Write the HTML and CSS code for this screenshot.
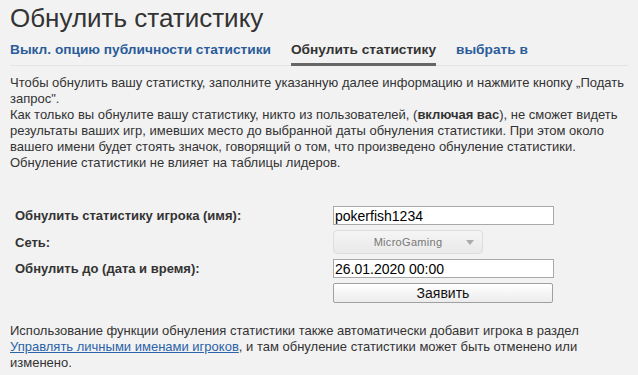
FILE: index.html
```html
<!DOCTYPE html>
<html lang="ru">
  <head>
    <title>Обнулить статистику</title>
    <meta charset="UTF-8" />
    <link rel="stylesheet" href="styles.css">
  </head>
  <body>
    <div class="page">
      <h1 class="page__title">Обнулить статистику</h1>

      <div class="tabs">
        <a class="tabs__item" href="#">Выкл. опцию публичности статистики</a>
        <a class="tabs__item tabs__item--active" href="#">Обнулить статистику</a>
        <a class="tabs__item" href="#">выбрать в</a>
      </div>

      <p class="page__text">
        Чтобы обнулить вашу статистку, заполните указанную далее информацию и нажмите кнопку „Подать запрос".<br>
        Как только вы обнулите вашу статистику, никто из пользователей, (<b>включая вас</b>), не сможет видеть результаты ваших игр, имевших место до выбранной даты обнуления статистики. При этом около вашего имени будет стоять значок, говорящий о том, что произведено обнуление статистики. Обнуление статистики не влияет на таблицы лидеров.
      </p>

      <form class="reset-form">
        <div class="reset-form__row">
          <label class="reset-form__label">Обнулить статистику игрока (имя):</label>
          <input class="reset-form__input" type="text" value="pokerfish1234">
        </div>
        <div class="reset-form__row">
          <label class="reset-form__label">Сеть:</label>
          <div class="select select--disabled">
            <span class="select__value">MicroGaming</span>
            <span class="select__arrow"></span>
          </div>
        </div>
        <div class="reset-form__row">
          <label class="reset-form__label">Обнулить до (дата и время):</label>
          <input class="reset-form__input" type="text" value="26.01.2020 00:00">
        </div>
        <div class="reset-form__row">
          <span class="reset-form__label"></span>
          <button class="reset-form__button" type="button">Заявить</button>
        </div>
      </form>

      <p class="page__text page__note">
        Использование функции обнуления статистики также автоматически добавит игрока в раздел
        <a href="#">Управлять личными именами игроков</a>, и там обнуление статистики может быть отменено или изменено.
      </p>
    </div>
  </body>
</html>
```

FILE: styles.css
```css
body {
  margin: 0;
  font-family: 'Liberation Sans', Arial, sans-serif;
  background: #f2f2f2;
  color: #333333;
}

.page {
  padding: 0 10px;
}

.page__title {
  margin: 0;
  padding-top: 3px;
  font-size: 26px;
  font-weight: normal;
  line-height: 30px;
  color: #333333;
}

.tabs {
  display: flex;
  gap: 20px;
  margin-top: 6px;
  border-bottom: 1px solid #e4e4e4;
}

.tabs__item {
  padding: 3px 0 5px;
  font-size: 13.7px;
  font-weight: bold;
  line-height: 16px;
  color: #2b5c9a;
  text-decoration: none;
  border-bottom: 3px solid transparent;
  margin-bottom: -1px;
}

.tabs__item--active {
  color: #333333;
  border-bottom-color: #666666;
}

.page__text {
  margin: 9px 0 0;
  font-size: 13px;
  line-height: 16px;
}

.page__text a {
  color: #2b62a8;
}

.reset-form {
  margin-top: 35px;
  padding-left: 5px;
}

.reset-form__row {
  display: flex;
  align-items: center;
  margin-bottom: 5px;
}

.reset-form__label {
  width: 318px;
  font-size: 13px;
  font-weight: bold;
}

.reset-form__input {
  box-sizing: border-box;
  width: 221px;
  height: 19px;
  padding: 0 1px;
  border: 1px solid #a9a9a9;
  background: #ffffff;
  font-family: 'Liberation Sans', Arial, sans-serif;
  font-size: 14px;
  color: #000000;
}

.select {
  box-sizing: border-box;
  position: relative;
  display: flex;
  align-items: center;
  justify-content: center;
  width: 150px;
  height: 24px;
  border: 1px solid #dddddd;
  border-radius: 4px;
  background: linear-gradient(#f5f5f5, #e9e9e9);
}

.select__value {
  font-size: 11px;
  color: #777777;
  letter-spacing: 0.3px;
}

.select__arrow {
  position: absolute;
  right: 8px;
  top: 9px;
  border-left: 4px solid transparent;
  border-right: 4px solid transparent;
  border-top: 5px solid #aaaaaa;
}

.reset-form__button {
  box-sizing: border-box;
  width: 220px;
  height: 20px;
  padding: 0;
  border: 1px solid #a0a0a0;
  border-radius: 2px;
  background: linear-gradient(#ffffff, #ececec);
  font-family: 'Liberation Sans', Arial, sans-serif;
  font-size: 14px;
  color: #111111;
}

.page__note {
  margin-top: 20px;
}
```
